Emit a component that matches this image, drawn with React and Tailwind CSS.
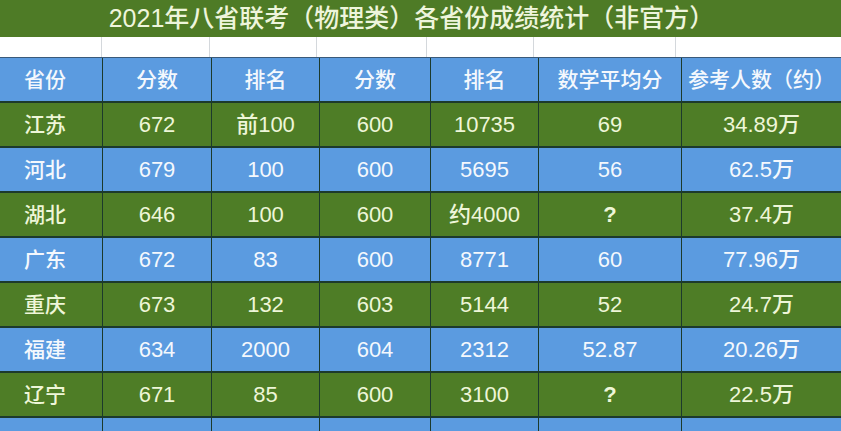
import React from 'react';

const cols = ['省份', '分数', '排名', '分数', '排名', '数学平均分', '参考人数（约）'];

const rows = [
  ['江苏', '672', '前100', '600', '10735', '69', '34.89万'],
  ['河北', '679', '100', '600', '5695', '56', '62.5万'],
  ['湖北', '646', '100', '600', '约4000', '?', '37.4万'],
  ['广东', '672', '83', '600', '8771', '60', '77.96万'],
  ['重庆', '673', '132', '603', '5144', '52', '24.7万'],
  ['福建', '634', '2000', '604', '2312', '52.87', '20.26万'],
  ['辽宁', '671', '85', '600', '3100', '?', '22.5万'],
];

const App = () => {
  return (
    <div
      className="w-[841px] h-[431px] overflow-hidden bg-white"
      style={{ fontFamily: '"Liberation Sans", "Noto Sans CJK SC", sans-serif' }}
    >
      {/* 标题 */}
      <div className="h-[37px] bg-[#4e7b26] flex items-center justify-center pr-[18px] text-[25px] text-[#eef5dc] font-medium">
        2021年八省联考（物理类）各省份成绩统计（非官方）
      </div>

      {/* 空白行 */}
      <div className="h-[21px] grid grid-cols-[102px_108px_107px_110px_107px_142px_1fr] border-b border-[#3a5a7a]">
        {cols.map((_, i) => (
          <div key={i} className={i < 6 ? 'border-r border-[#d4d8dc]' : ''} />
        ))}
      </div>

      {/* 表格 */}
      <div className="grid grid-cols-[102px_108px_107px_110px_107px_142px_1fr] gap-x-px gap-y-[2px] bg-[#1c3a2c] text-[22px] font-medium">
        {cols.map((c, i) => (
          <div
            key={'h' + i}
            className={`h-[43px] bg-[#5b9be0] text-[#f4f8fd] flex items-center justify-center text-[21px] ${i === 0 ? 'pr-[12px]' : ''}`}
          >
            {c}
          </div>
        ))}
        {rows.map((r, ri) =>
          r.map((v, ci) => (
            <div
              key={ri + '-' + ci}
              className={`h-[43px] flex items-center justify-center ${
                ri % 2 === 0 ? 'bg-[#4e7d26] text-[#eef6d8]' : 'bg-[#5b9be0] text-[#f4f8fd]'
              } ${ci === 0 ? 'pr-[12px] text-[21px]' : ''} ${v === '?' ? 'font-bold' : ''}`}
            >
              {v}
            </div>
          ))
        )}
        {cols.map((_, i) => (
          <div key={'e' + i} className="h-[43px] bg-[#5b9be0]" />
        ))}
      </div>
    </div>
  );
};

export default App;
